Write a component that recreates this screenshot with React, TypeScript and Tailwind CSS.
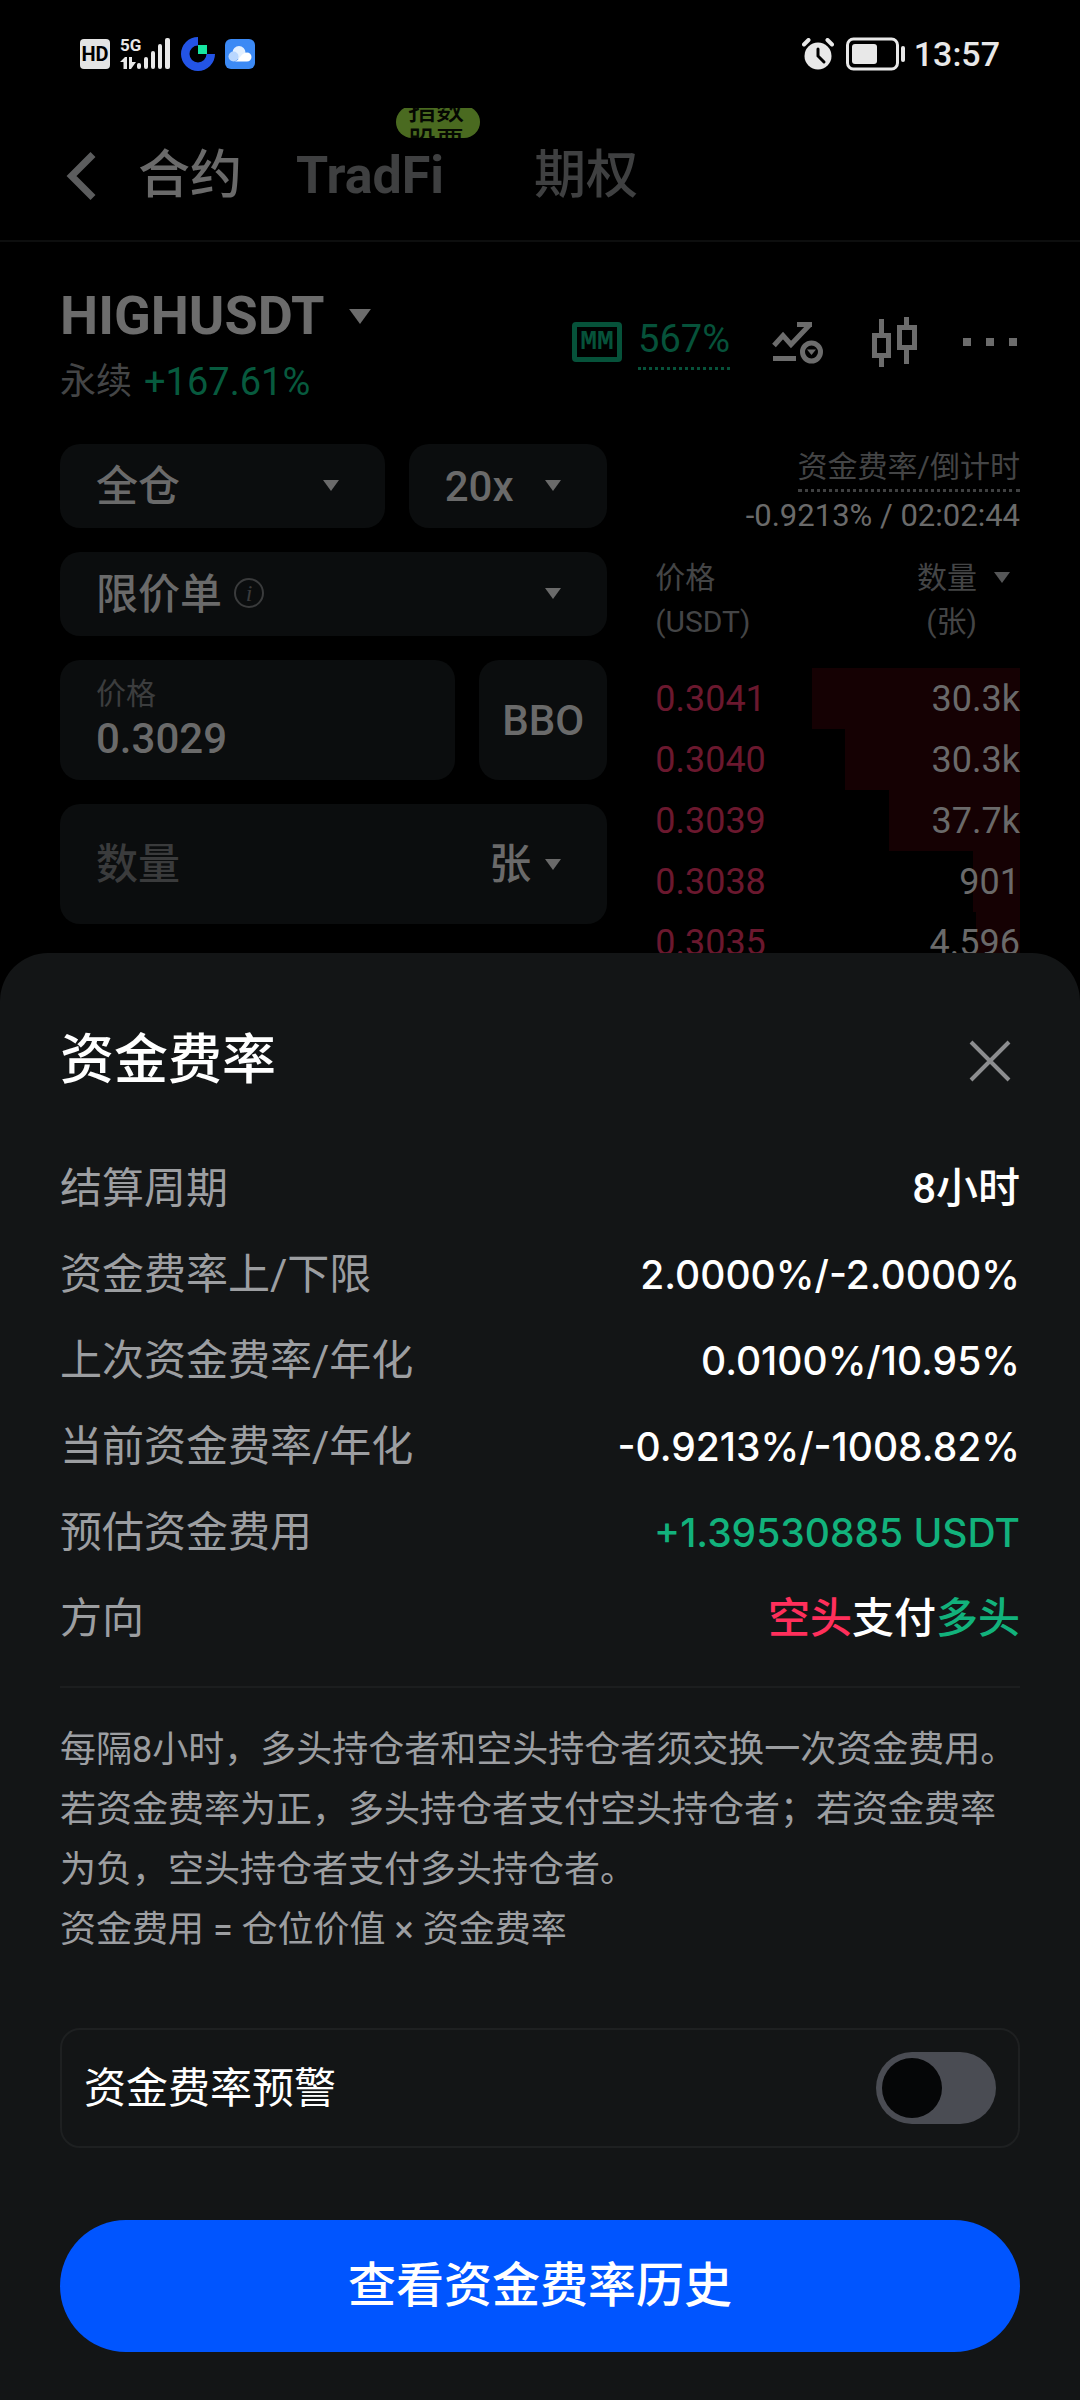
import { useState } from 'react';
import type { ReactNode } from 'react';

const asks = [
  { price: '0.3041', amount: '30.3k', depth: 57 },
  { price: '0.3040', amount: '30.3k', depth: 48 },
  { price: '0.3039', amount: '37.7k', depth: 36 },
  { price: '0.3038', amount: '901', depth: 13 },
  { price: '0.3035', amount: '4.596', depth: 12 },
];

const details: { label: string; value: ReactNode }[] = [
  { label: '结算周期', value: '8小时' },
  { label: '资金费率上/下限', value: <Figure>2.0000%/-2.0000%</Figure> },
  { label: '上次资金费率/年化', value: <Figure>0.0100%/10.95%</Figure> },
  { label: '当前资金费率/年化', value: <Figure>-0.9213%/-1008.82%</Figure> },
  {
    label: '预估资金费用',
    value: (
      <span className="text-[#12b27c]">
        <Figure>+1.39530885 USDT</Figure>
      </span>
    ),
  },
  {
    label: '方向',
    value: (
      <>
        <span className="text-[#ff2f5b]">空头</span>支付
        <span className="text-[#12b27c]">多头</span>
      </>
    ),
  },
];

function Figure({ children }: { children: ReactNode }) {
  return <span className="font-['Inter'] text-[39px]">{children}</span>;
}

function Caret({ className }: { className: string }) {
  return (
    <svg viewBox="0 0 16 11" className={className} fill="currentColor" aria-hidden="true">
      <path d="M0 0h16L8 11z" />
    </svg>
  );
}

function StatusBar() {
  return (
    <div className="flex h-27 items-center justify-between px-20 text-[#e8e8e8]">
      <div className="flex items-center gap-2.5">
        <span className="flex size-[30px] items-center justify-center rounded bg-[#e4e4e4] text-xl font-bold text-black">
          HD
        </span>
        <svg viewBox="0 0 51 34" className="h-[34px] w-[51px]" fill="currentColor" aria-hidden="true">
          <text x="0" y="14" fontSize="17" fontWeight="700" fontFamily="Roboto, sans-serif">
            5G
          </text>
          <path d="M3.500 32v-7H0l5-5h2v12zM9 20h3v5h4l-5 7H9z" />
          <rect x="17" y="26" width="4" height="6" rx="2" />
          <rect x="24" y="20" width="4" height="12" rx="2" />
          <rect x="31" y="14" width="4" height="18" rx="2" />
          <rect x="38" y="7" width="4" height="25" rx="2" />
          <rect x="45" y="1" width="5" height="31" rx="2" />
        </svg>
        <svg viewBox="0 0 34 34" className="size-[34px]" aria-hidden="true">
          <path d="M17 0a17 17 0 1 0 17 17h-8.500A8.500 8.500 0 1 1 17 8.500z" fill="#2354e6" />
          <path d="M17 8h9v9h-9z" fill="#17e6a1" />
        </svg>
        <svg viewBox="0 0 30 30" className="size-[30px]" aria-hidden="true">
          <rect width="30" height="30" rx="6" fill="#3c8af5" />
          <circle cx="14" cy="13.500" r="6.500" fill="#e3f0ff" />
          <circle cx="8.500" cy="17.500" r="5" fill="#b9d7ff" />
          <path d="M8 22.500c4 0 5-2 7.500-5s4-4 6.500-4a4.500 4.500 0 0 1 0 9z" fill="#fff" />
        </svg>
      </div>
      <div className="flex items-center">
        <svg viewBox="0 0 32 32" className="size-8" aria-hidden="true">
          <circle cx="16" cy="18" r="13.500" fill="currentColor" />
          <path d="M2 6.500 6.500 2M30 6.500 25.500 2" stroke="currentColor" strokeWidth="4" strokeLinecap="round" />
          <path d="M16 11v7l6 6" stroke="#000" strokeWidth="3" strokeLinecap="round" fill="none" />
        </svg>
        <svg viewBox="0 0 60 34" className="mr-2 ml-3 h-[34px] w-[60px]" fill="currentColor" aria-hidden="true">
          <rect x="1.500" y="2" width="50" height="30" rx="6" fill="none" stroke="currentColor" strokeWidth="3" />
          <rect x="6" y="7" width="25" height="20" rx="3" />
          <rect x="55" y="9" width="4" height="16" rx="2" />
        </svg>
        <span className="text-[34px] font-medium">13:57</span>
      </div>
    </div>
  );
}

function Tabs() {
  return (
    <nav className="relative flex h-[134px] items-center overflow-hidden border-b-2 border-[#0d0e0e] px-15 pt-1 text-[52px] font-medium text-[#3f4041]">
      <button type="button" aria-label="返回" className="mr-[38px] text-[#5c5d5e]">
        <svg viewBox="0 0 40 48" className="h-12 w-10" fill="none" stroke="currentColor" strokeWidth="7">
          <path d="M33 2.500 11.500 24 33 45.500" />
        </svg>
      </button>
      <a href="#" className="mr-[54px] text-[#6a6a6a]" aria-current="page">
        合约
      </a>
      <a href="#" className="mr-[54px] pr-9 font-bold">
        TradFi
      </a>
      <span className="absolute -top-0.5 left-[396px] flex h-8 w-21 items-center justify-center overflow-hidden rounded-full bg-[#4a6a20] px-3 pt-2.5 text-[28px] leading-8 text-[#050802]">
        <span className="w-15">指数 股票</span>
      </span>
      <a href="#">期权</a>
    </nav>
  );
}

function Ticker() {
  return (
    <div className="flex items-center justify-between">
      <div>
        <button type="button" className="flex items-center gap-6 pt-0.5 text-[54px] leading-16 font-bold text-[#6c6c6c]">
          HIGHUSDT
          <Caret className="h-[15px] w-[22px]" />
        </button>
        <div className="mt-3.5 flex gap-3 text-[36px] leading-10 text-[#444546]">
          <span>永续</span>
          <span className="text-[38px] text-[#075a3e]">+167.61%</span>
        </div>
      </div>
      <div className="flex items-center text-[#6c6c6c]">
        <span className="flex h-10 w-[50px] items-center justify-center rounded-sm border-5 border-[#06523a] font-['Liberation_Mono'] text-[28px] font-bold text-[#06523a]">
          MM
        </span>
        <span className="ml-4 border-b-3 border-dotted border-[#06523a] pb-1 text-[38px] leading-12 text-[#06523a]">
          567%
        </span>
        <button type="button" aria-label="指标" className="ml-[42px]">
          <svg viewBox="0 0 52 44" className="h-11 w-[52px]" fill="none" stroke="currentColor" strokeWidth="5">
            <path d="M2 25.500 11 15.500l8 9L38 4.500M25 4.500h15M1 38.500h23" />
            <circle cx="39.500" cy="32" r="9" />
            <path d="M35 29.500h9L39.500 35z" fill="currentColor" stroke="none" />
          </svg>
        </button>
        <button type="button" aria-label="K线" className="ml-[46px]">
          <svg viewBox="0 0 48 52" className="h-[52px] w-12" fill="none" stroke="currentColor" strokeWidth="5">
            <path d="M11.500 3v14M11.500 42v9M36.500 1v8M36.500 34v14" />
            <rect x="4.500" y="19.500" width="14" height="20" />
            <rect x="29.500" y="11.500" width="15" height="20" />
          </svg>
        </button>
        <button type="button" aria-label="更多" className="ml-11">
          <svg viewBox="0 0 58 8" className="h-2 w-[58px]" fill="currentColor">
            <path d="M1 0h8v8H1zM24 0h8v8h-8zM47 0h8v8h-8z" />
          </svg>
        </button>
      </div>
    </div>
  );
}

function Picker({ label, value, children }: { label: string; value: string; children?: ReactNode }) {
  return (
    <div className="relative">
      <select
        aria-label={label}
        className="h-21 w-full appearance-none rounded-[20px] bg-[#0b0d0e] px-9 text-[42px] font-medium"
      >
        <option>{value}</option>
      </select>
      {children}
      <Caret className="pointer-events-none absolute top-9 right-[46px] h-[11px] w-4" />
    </div>
  );
}

function OrderForm() {
  return (
    <form className="flex min-w-0 flex-col gap-6 text-[#6a6a6a]">
      <div className="grid grid-cols-[18fr_11fr] gap-6">
        <Picker label="保证金模式" value="全仓" />
        <Picker label="杠杆" value="20x" />
      </div>
      <Picker label="委托类型" value="限价单">
        <span className="absolute top-[26px] left-[174px] flex size-[30px] items-center justify-center rounded-full border-2 border-[#3a3b3c] font-['Liberation_Serif'] text-2xl leading-none text-[#3a3b3c] italic">
          i
        </span>
      </Picker>
      <div className="flex gap-6">
        <label className="flex h-30 min-w-0 flex-1 flex-col justify-center rounded-[20px] bg-[#0b0d0e] px-9">
          <span className="text-[30px] leading-9 text-[#3c3d3e]">价格</span>
          <input defaultValue="0.3029" className="h-13 w-full bg-transparent text-[42px] font-medium outline-none" />
        </label>
        <button type="button" className="h-30 w-32 rounded-[20px] bg-[#0b0d0e] text-[42px] font-medium">
          BBO
        </button>
      </div>
      <div className="relative flex h-30 items-center rounded-[20px] bg-[#0b0d0e] pr-[46px] pl-9 text-[42px] font-medium">
        <input
          aria-label="数量"
          placeholder="数量"
          className="min-w-0 flex-1 bg-transparent outline-none placeholder:text-[#3a3b3c]"
        />
        <select aria-label="单位" className="w-18 appearance-none bg-transparent">
          <option>张</option>
        </select>
        <Caret className="pointer-events-none absolute right-[46px] h-[11px] w-4" />
      </div>
    </form>
  );
}

function OrderBook() {
  return (
    <div className="min-w-0 text-right text-[30px] text-[#6a6a6a]">
      <div>
        <span className="inline-block border-b-3 border-dotted border-[#3f4041] leading-11 text-[#444546]">
          资金费率/倒计时
        </span>
      </div>
      <div className="text-[31px] leading-12 whitespace-nowrap">-0.9213% / 02:02:44</div>
      <table className="mt-4 w-full border-collapse">
        <thead className="leading-11 text-[#444546]">
          <tr>
            <th className="pb-6 text-left font-normal">
              价格
              <br />
              (USDT)
            </th>
            <th className="relative pr-[43px] pb-6 font-normal">
              数量
              <br />
              (张)
              <Caret className="absolute top-4 right-2.5 h-[11px] w-4 text-[#555657]" />
            </th>
          </tr>
        </thead>
        <tbody className="text-[36px]">
          {asks.map((row) => (
            <tr
              key={row.price}
              className="h-[61px]"
              style={{
                backgroundImage: `linear-gradient(to left, #150103 ${row.depth}%, transparent ${row.depth}%)`,
              }}
            >
              <td className="p-0 text-left text-[#6b182e]">{row.price}</td>
              <td className="p-0">{row.amount}</td>
            </tr>
          ))}
        </tbody>
      </table>
    </div>
  );
}

function FundingSheet() {
  const [alert, setAlert] = useState(false);

  return (
    <section
      role="dialog"
      aria-labelledby="funding-title"
      className="absolute inset-x-0 bottom-0 rounded-t-[48px] bg-[#131516] px-15 pt-19 pb-12 text-white"
    >
      <div className="flex h-16 items-center justify-between">
        <h2 id="funding-title" className="text-[54px] leading-16 font-medium">
          资金费率
        </h2>
        <button type="button" aria-label="关闭" className="mr-2 text-[#8c8d8f]">
          <svg viewBox="0 0 44 44" className="size-11" fill="none" stroke="currentColor" strokeWidth="4">
            <path d="m3 3 38 38M41 3 3 41" />
          </svg>
        </button>
      </div>

      <dl className="mt-13 text-[42px]">
        {details.map((item) => (
          <div key={item.label} className="flex h-[86px] items-center justify-between">
            <dt className="text-[#9c9ea1]">{item.label}</dt>
            <dd className="font-medium">{item.value}</dd>
          </div>
        ))}
      </dl>

      <hr className="mt-[25px] border-t-2 border-[#1c1e1f]" />

      <div className="mt-8 text-[36px] leading-15 text-[#9c9ea1]">
        <p>
          每隔8小时，多头持仓者和空头持仓者须交换一次资金费用。若资金费率为正，多头持仓者支付空头持仓者；若资金费率为负，空头持仓者支付多头持仓者。
        </p>
        <p>资金费用 = 仓位价值 × 资金费率</p>
      </div>

      <label className="mt-17 flex h-30 items-center justify-between rounded-[20px] border-2 border-[#1e2021] px-[22px] text-[42px]">
        资金费率预警
        <input
          type="checkbox"
          role="switch"
          checked={alert}
          onChange={(e) => setAlert(e.target.checked)}
          className="flex h-18 w-30 appearance-none items-center rounded-full bg-[#4a4c53] px-1.5 before:size-[60px] before:rounded-full before:bg-[#050607] checked:justify-end checked:bg-[#0055ff]"
        />
      </label>

      <button type="button" className="mt-18 h-33 w-full rounded-full bg-[#0055ff] text-5xl font-medium">
        查看资金费率历史
      </button>
    </section>
  );
}

export default function App() {
  return (
    <div
      lang="zh-CN"
      className="relative min-h-screen overflow-hidden bg-black font-['Roboto','Noto_Sans_CJK_SC',sans-serif]"
    >
      <StatusBar />
      <Tabs />
      <main className="px-15 pt-10">
        <Ticker />
        <div className="mt-[42px] grid grid-cols-[3fr_2fr] gap-12">
          <OrderForm />
          <OrderBook />
        </div>
      </main>
      <FundingSheet />
    </div>
  );
}
